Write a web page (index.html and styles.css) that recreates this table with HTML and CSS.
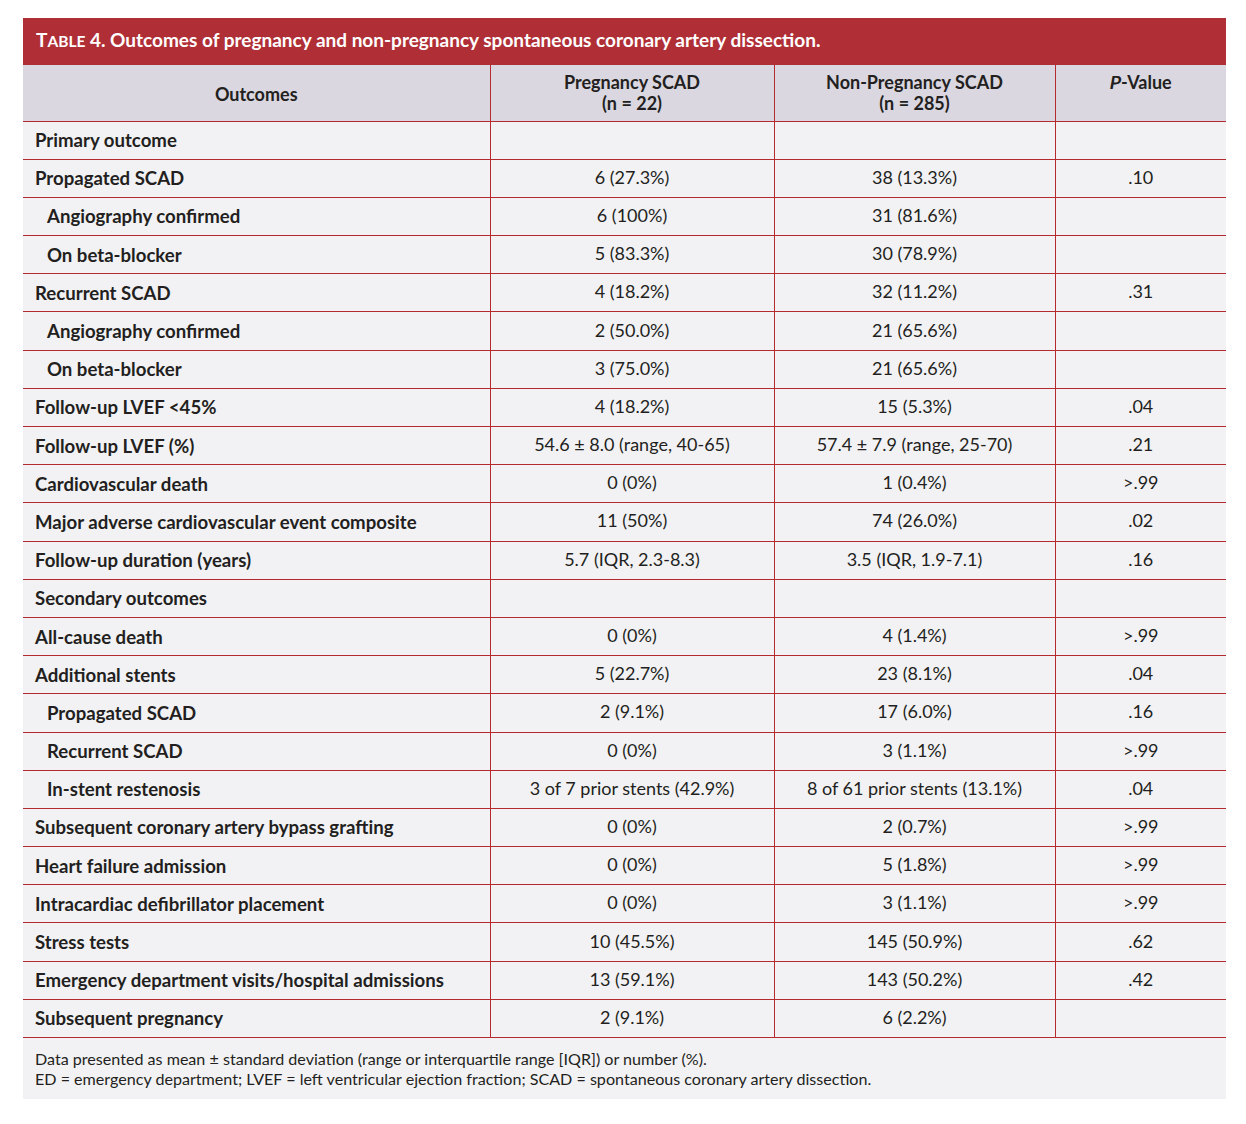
FILE: index.html
```html
<!DOCTYPE html>
<html>
<head>
<meta charset="utf-8">
<link rel="stylesheet" href="styles.css">
</head>
<body>
<div class="panel">
  <div class="title">T<span class="sc">ABLE</span> 4. Outcomes of pregnancy and non-pregnancy spontaneous coronary artery dissection.</div>
  <table class="data">
    <colgroup>
      <col class="c1"><col class="c2"><col class="c3"><col class="c4">
    </colgroup>
    <thead>
      <tr>
        <th class="mid">Outcomes</th>
        <th>Pregnancy SCAD<br>(n = 22)</th>
        <th>Non-Pregnancy SCAD<br>(n = 285)</th>
        <th><i class="it">P</i>-Value</th>
      </tr>
    </thead>
    <tbody>
      <tr><td class="lab">Primary outcome</td><td></td><td></td><td></td></tr>
      <tr><td class="lab">Propagated SCAD</td><td>6 (27.3%)</td><td>38 (13.3%)</td><td>.10</td></tr>
      <tr><td class="lab sub">Angiography confirmed</td><td>6 (100%)</td><td>31 (81.6%)</td><td></td></tr>
      <tr><td class="lab sub">On beta-blocker</td><td>5 (83.3%)</td><td>30 (78.9%)</td><td></td></tr>
      <tr><td class="lab">Recurrent SCAD</td><td>4 (18.2%)</td><td>32 (11.2%)</td><td>.31</td></tr>
      <tr><td class="lab sub">Angiography confirmed</td><td>2 (50.0%)</td><td>21 (65.6%)</td><td></td></tr>
      <tr><td class="lab sub">On beta-blocker</td><td>3 (75.0%)</td><td>21 (65.6%)</td><td></td></tr>
      <tr><td class="lab">Follow-up LVEF &lt;45%</td><td>4 (18.2%)</td><td>15 (5.3%)</td><td>.04</td></tr>
      <tr><td class="lab">Follow-up LVEF (%)</td><td>54.6 ± 8.0 (range, 40-65)</td><td>57.4 ± 7.9 (range, 25-70)</td><td>.21</td></tr>
      <tr><td class="lab">Cardiovascular death</td><td>0 (0%)</td><td>1 (0.4%)</td><td>&gt;.99</td></tr>
      <tr><td class="lab">Major adverse cardiovascular event composite</td><td>11 (50%)</td><td>74 (26.0%)</td><td>.02</td></tr>
      <tr><td class="lab">Follow-up duration (years)</td><td>5.7 (IQR, 2.3-8.3)</td><td>3.5 (IQR, 1.9-7.1)</td><td>.16</td></tr>
      <tr><td class="lab">Secondary outcomes</td><td></td><td></td><td></td></tr>
      <tr><td class="lab">All-cause death</td><td>0 (0%)</td><td>4 (1.4%)</td><td>&gt;.99</td></tr>
      <tr><td class="lab">Additional stents</td><td>5 (22.7%)</td><td>23 (8.1%)</td><td>.04</td></tr>
      <tr><td class="lab sub">Propagated SCAD</td><td>2 (9.1%)</td><td>17 (6.0%)</td><td>.16</td></tr>
      <tr><td class="lab sub">Recurrent SCAD</td><td>0 (0%)</td><td>3 (1.1%)</td><td>&gt;.99</td></tr>
      <tr><td class="lab sub">In-stent restenosis</td><td>3 of 7 prior stents (42.9%)</td><td>8 of 61 prior stents (13.1%)</td><td>.04</td></tr>
      <tr><td class="lab">Subsequent coronary artery bypass grafting</td><td>0 (0%)</td><td>2 (0.7%)</td><td>&gt;.99</td></tr>
      <tr><td class="lab">Heart failure admission</td><td>0 (0%)</td><td>5 (1.8%)</td><td>&gt;.99</td></tr>
      <tr><td class="lab">Intracardiac defibrillator placement</td><td>0 (0%)</td><td>3 (1.1%)</td><td>&gt;.99</td></tr>
      <tr><td class="lab">Stress tests</td><td>10 (45.5%)</td><td>145 (50.9%)</td><td>.62</td></tr>
      <tr><td class="lab">Emergency department visits/hospital admissions</td><td>13 (59.1%)</td><td>143 (50.2%)</td><td>.42</td></tr>
      <tr><td class="lab">Subsequent pregnancy</td><td>2 (9.1%)</td><td>6 (2.2%)</td><td></td></tr>
    </tbody>
  </table>
  <div class="foot">
    <p>Data presented as mean ± standard deviation (range or interquartile range [IQR]) or number (%).</p>
    <p>ED = emergency department; LVEF = left ventricular ejection fraction; SCAD = spontaneous coronary artery dissection.</p>
  </div>
</div>
</body>
</html>
```

FILE: styles.css
```css
html, body {
  margin: 0;
  padding: 0;
  background: #ffffff;
}

body {
  font-family: Lato, "Open Sans", sans-serif;
  color: #231f20;
}

.panel {
  width: 1203px;
  margin: 18px 0 0 23px;
}

.title {
  background: #b02e35;
  color: #ffffff;
  font-weight: 700;
  font-size: 19px;
  height: 47px;
  line-height: 44px;
  padding-left: 13px;
  box-sizing: border-box;
  white-space: nowrap;
}

.sc {
  font-size: 15.5px;
}

.data {
  width: 1203px;
  border-collapse: collapse;
  table-layout: fixed;
  background: #f2f2f5;
}

.c1 { width: 467px; }
.c2 { width: 284px; }
.c3 { width: 281px; }
.c4 { width: 171px; }

.data th {
  background: #dad7e1;
  font-weight: 700;
  font-size: 18px;
  line-height: 21px;
  height: 56px;
  padding: 7px 0 0;
  vertical-align: top;
  text-align: center;
  border-bottom: 1px solid #b5292f;
  box-sizing: border-box;
}

.data th.mid {
  vertical-align: middle;
  padding: 3px 0 0;
}

.it {
  font-style: normal;
  display: inline-block;
  transform: skewX(-10deg);
}

.data th + th,
.data td + td {
  border-left: 1px solid #b5292f;
}

.data td {
  box-sizing: border-box;
  height: 38.2px;
  padding: 0 0 3px;
  font-size: 18px;
  line-height: 20px;
  text-align: center;
  border-bottom: 1px solid #b5292f;
  vertical-align: middle;
  white-space: nowrap;
}

.data td.lab {
  text-align: left;
  padding: 0 0 0 12px;
  font-weight: 700;
  font-size: 18.6px;
}

.data td.sub {
  padding-left: 24px;
}

.foot {
  background: #f2f2f5;
  padding: 11px 12px 10px;
  font-size: 16.1px;
  line-height: 20px;
}

.foot p {
  margin: 0;
}
```
